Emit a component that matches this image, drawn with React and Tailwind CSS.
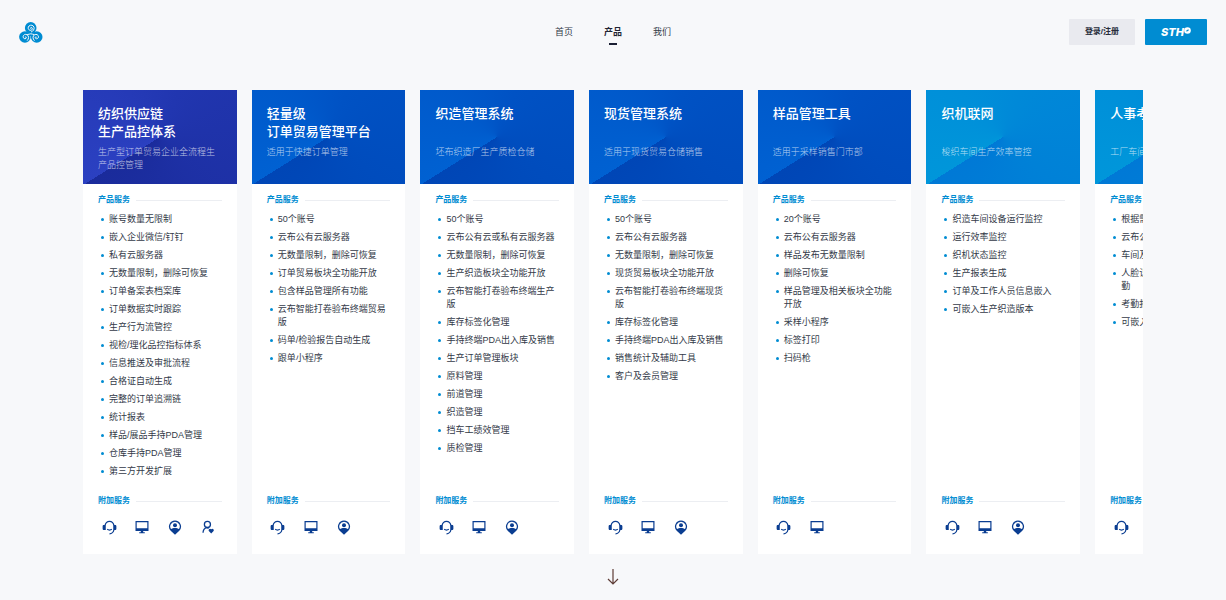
import React from "react";
import { RiCustomerService2Fill } from "react-icons/ri";

const tones = {
  indigo: "bg-[conic-gradient(from_238deg_at_50%_50%,#2b40c1,#2136b0_40%,#1a2b9b)]",
  blue: "bg-[conic-gradient(from_238deg_at_50%_50%,#0061d2,#0052c4_40%,#0046b6)]",
  cyan: "bg-[conic-gradient(from_238deg_at_50%_50%,#0096da,#0089d8_40%,#0079d6)]",
};

const products = [
  {
    title: ["纺织供应链", "生产品控体系"],
    desc: "生产型订单贸易企业全流程生产品控管理",
    tone: "indigo",
    services: [
      "账号数量无限制",
      "嵌入企业微信/钉钉",
      "私有云服务器",
      "无数量限制，删除可恢复",
      "订单备案表档案库",
      "订单数据实时跟踪",
      "生产行为流管控",
      "视检/理化品控指标体系",
      "信息推送及审批流程",
      "合格证自动生成",
      "完整的订单追溯链",
      "统计报表",
      "样品/展品手持PDA管理",
      "仓库手持PDA管理",
      "第三方开发扩展",
    ],
    extras: ["support", "desktop", "onsite", "care"],
  },
  {
    title: ["轻量级", "订单贸易管理平台"],
    desc: "适用于快捷订单管理",
    tone: "blue",
    services: [
      "50个账号",
      "云布公有云服务器",
      "无数量限制，删除可恢复",
      "订单贸易板块全功能开放",
      "包含样品管理所有功能",
      "云布智能打卷验布终端贸易版",
      "码单/检验报告自动生成",
      "跟单小程序",
    ],
    extras: ["support", "desktop", "onsite"],
  },
  {
    title: ["织造管理系统"],
    desc: "坯布织造厂生产质检仓储",
    tone: "blue",
    services: [
      "50个账号",
      "云布公有云或私有云服务器",
      "无数量限制，删除可恢复",
      "生产织造板块全功能开放",
      "云布智能打卷验布终端生产版",
      "库存标签化管理",
      "手持终端PDA出入库及销售",
      "生产订单管理板块",
      "原料管理",
      "前道管理",
      "织造管理",
      "挡车工绩效管理",
      "质检管理",
    ],
    extras: ["support", "desktop", "onsite"],
  },
  {
    title: ["现货管理系统"],
    desc: "适用于现货贸易仓储销售",
    tone: "blue",
    services: [
      "50个账号",
      "云布公有云服务器",
      "无数量限制，删除可恢复",
      "现货贸易板块全功能开放",
      "云布智能打卷验布终端现货版",
      "库存标签化管理",
      "手持终端PDA出入库及销售",
      "销售统计及辅助工具",
      "客户及会员管理",
    ],
    extras: ["support", "desktop", "onsite"],
  },
  {
    title: ["样品管理工具"],
    desc: "适用于采样销售门市部",
    tone: "blue",
    services: [
      "20个账号",
      "云布公有云服务器",
      "样品发布无数量限制",
      "删除可恢复",
      "样品管理及相关板块全功能开放",
      "采样小程序",
      "标签打印",
      "扫码枪",
    ],
    extras: ["support", "desktop"],
  },
  {
    title: ["织机联网"],
    desc: "梭织车间生产效率管控",
    tone: "cyan",
    services: [
      "织造车间设备运行监控",
      "运行效率监控",
      "织机状态监控",
      "生产报表生成",
      "订单及工作人员信息嵌入",
      "可嵌入生产织造版本",
    ],
    extras: ["support", "desktop", "onsite"],
  },
  {
    title: ["人事考勤"],
    desc: "工厂车间人事管理",
    tone: "cyan",
    services: [
      "根据需求定制",
      "云布公有云服务器",
      "车间及办公室管理",
      "人脸识别终端设备自动化考勤",
      "考勤报表生成",
      "可嵌入生产织造版本",
    ],
    extras: ["support"],
  },
];

function Logo() {
  return (
    <svg width="24" height="21" viewBox="0 0 24 21" fill="none">
      <g fill="#008cd2">
        <circle cx="11.7" cy="5.9" r="5.8" />
        <circle cx="5.9" cy="15" r="5.8" />
        <circle cx="17.7" cy="15" r="5.8" />
        <path d="M9 9h6v5H9z" />
      </g>
      <g stroke="#f7f8fa" strokeWidth="1" strokeLinecap="round">
        <path d="M11.500 6.300c-.4-1.100 1.300-1.400 1.700-.2.500 1.500-.9 2.600-2.300 2.200-1.900-.6-2.300-3-.9-4.300 1.700-1.500 4.400-.9 5 1.300.5 2.100-.7 3.800-2.600 4.600" />
        <path d="M6.300 15c.9-.7 1.600.7.700 1.400-1.200.9-2.900 0-2.900-1.600 0-1.900 2.200-3.100 4-2 1.900 1.200 2 3.900.3 5.600" />
        <path d="M17.300 15c-.9-.7-1.600.7-.7 1.400 1.200.9 2.900 0 2.900-1.600 0-1.900-2.200-3.100-4-2-1.900 1.200-2 3.900-.3 5.600" />
        <path d="M8.500 12.600c1.300-.1 2.200-.8 3.300-.8s2 .7 3.300.8" />
      </g>
    </svg>
  );
}

function DesktopIcon() {
  return (
    <svg width="14" height="14" viewBox="0 0 14 14" fill="currentColor">
      <path fillRule="evenodd" d="M.5 1h13v10H.5zM1.700 2.200v6h10.600v-6z" />
      <path d="M5.800 11h2.400v1.300h1.600v1H4.200v-1h1.600z" />
    </svg>
  );
}

function PinUserIcon() {
  return (
    <svg width="14" height="15" viewBox="0 0 14 15" fill="currentColor">
      <path
        fillRule="evenodd"
        d="M7 .5a6 6 0 0 1 4.300 10.200L7 14.800l-4.300-4.100A6 6 0 0 1 7 .5zm0 1.200a4.800 4.800 0 0 0-4 7.400C4 8.200 5.400 7.900 7 7.900s3 .3 4 1.200a4.800 4.800 0 0 0-4-7.400z"
      />
      <circle cx="7" cy="5.200" r="2" />
    </svg>
  );
}

function UserHeartIcon() {
  return (
    <svg width="14" height="14" viewBox="0 0 24 24" fill="none">
      <circle cx="11" cy="7.500" r="5.200" stroke="currentColor" strokeWidth="2.200" />
      <path d="M3.500 22c0-4.500 2.500-8 6.500-9l3 1.500" stroke="currentColor" strokeWidth="2.200" />
      <path
        d="M17.500 23l-3.700-3.700a2.500 2.500 0 0 1 3.500-3.600l.2.200.2-.2a2.500 2.500 0 0 1 3.500 3.600z"
        fill="currentColor"
      />
    </svg>
  );
}

function ExtraIcon({ name }) {
  if (name === "support") return <RiCustomerService2Fill size={15} />;
  if (name === "desktop") return <DesktopIcon />;
  if (name === "onsite") return <PinUserIcon />;
  return <UserHeartIcon />;
}

function SectionLabel({ children }) {
  return (
    <h3 className="flex items-center gap-[6px] text-[8px] leading-[12px] font-bold text-[#008cd2]">
      {children}
      <span className="h-px flex-1 bg-[#eceef2]" />
    </h3>
  );
}

function ProductCard({ product }) {
  return (
    <article className="flex w-[14.5%] shrink-0 flex-col bg-white">
      <header className={`px-[15px] pt-[15px] pb-3 text-white ${tones[product.tone]}`}>
        <h2 className="min-h-9 text-[13px] leading-[18px] font-medium whitespace-nowrap">
          {product.title.map((line) => (
            <span className="block" key={line}>{line}</span>
          ))}
        </h2>
        <p className="mt-[5px] min-h-[26px] text-[9px] leading-[13px] font-light text-white/70">{product.desc}</p>
      </header>
      <div className="flex flex-1 flex-col px-[15px] pt-[10px] pb-5">
        <SectionLabel>产品服务</SectionLabel>
        <ul className="mt-[7px] mb-[17px] flex flex-1 flex-col gap-[5px] text-[9px] leading-[13px] text-[#333a48]">
          {product.services.map((service) => (
            <li className="flex" key={service}>
              <span className="mt-[5px] mr-[5px] ml-[3px] size-[3px] shrink-0 rounded-full bg-[#008cd2]" />
              <span>{service}</span>
            </li>
          ))}
        </ul>
        <SectionLabel>附加服务</SectionLabel>
        <div className="mt-[13px] ml-[3px] flex h-[14px] items-center gap-[17px] text-[#0a3d91]">
          {product.extras.map((name) => (
            <span className="flex w-4 justify-center" key={name}>
              <ExtraIcon name={name} />
            </span>
          ))}
        </div>
      </div>
    </article>
  );
}

export default function App() {
  return (
    <div lang="zh-CN" className="min-h-screen bg-[#f7f8fa] font-['Liberation_Sans','Noto_Sans_CJK_SC',sans-serif]">
      <header className="grid grid-cols-[1fr_auto_1fr] items-center px-[19px] py-[19px]">
        <a href="#" aria-label="首页">
          <Logo />
        </a>
        <nav className="flex gap-[31px] text-[9px] leading-[13px] text-[#333a48]">
          <a href="#">首页</a>
          <a href="#" className="relative font-bold text-[#1f2533]">
            产品
            <span className="absolute top-[17px] left-1/2 h-[2px] w-2 -translate-x-1/2 bg-[#1a1f33]" />
          </a>
          <a href="#">我们</a>
        </nav>
        <div className="flex justify-end gap-[10px]">
          <button className="h-[26px] w-[66px] rounded-[1px] bg-[#e9eaef] text-[8px] font-bold text-[#262c3a]">
            登录/注册
          </button>
          <button className="flex h-[26px] w-[62px] items-center justify-center rounded-[1px] bg-[#008cd2] text-white">
            <span className="font-['Inter'] text-[11px] leading-[13px] font-extrabold italic">STH</span>
            <svg className="mb-1" width="7" height="7" viewBox="0 0 7 7" fill="none">
              <circle cx="3.500" cy="3.500" r="3.300" fill="currentColor" />
              <path d="M2.400 4.200l2.200-1.400" stroke="#008cd2" strokeWidth="1.300" />
            </svg>
          </button>
        </div>
      </header>

      <main className="px-[83px] pt-[26px]">
        <div className="flex gap-[15px] overflow-hidden">
          {products.map((product) => (
            <ProductCard key={product.title[0]} product={product} />
          ))}
        </div>
      </main>

      <div className="flex justify-center py-[15px]">
        <button aria-label="向下">
          <svg width="12" height="16" viewBox="0 0 12 16" fill="none" stroke="#5e3c36" strokeWidth="1.200">
            <path d="M6 0v15M1 10l5 5 5-5" />
          </svg>
        </button>
      </div>
    </div>
  );
}
